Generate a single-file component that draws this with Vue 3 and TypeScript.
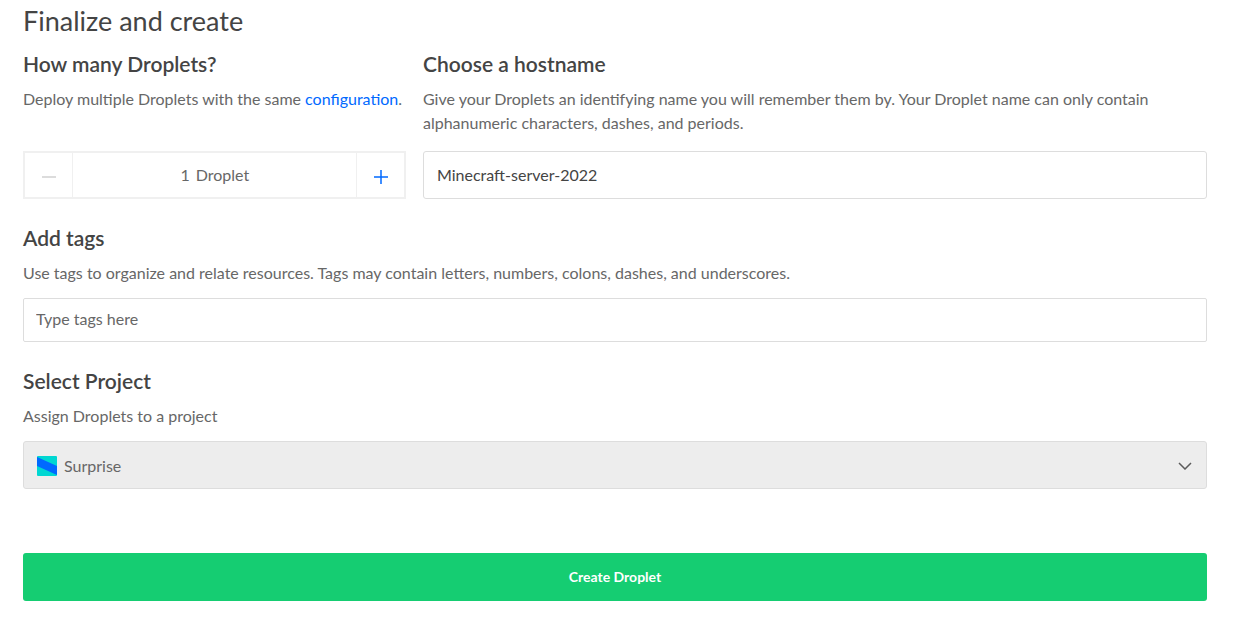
<script setup lang="ts">
import { computed, ref } from 'vue'

const count = ref<number>(1)
const hostname = ref<string>('Minecraft-server-2022')
const tags = ref<string>('')
const projects: string[] = ['Surprise']
const project = ref<string>(projects[0])

const unit = computed<string>(() => (Number(count.value) === 1 ? 'Droplet' : 'Droplets'))

function step(delta: number): void {
  count.value = Math.max(1, Number(count.value) + delta)
}
</script>

<template>
  <form class="finalize" @submit.prevent>
    <h1 class="title">Finalize and create</h1>

    <div class="columns">
      <section class="block quantity">
        <h2 class="heading"><label for="count">How many Droplets?</label></h2>
        <p class="description">
          Deploy multiple Droplets with the same <a href="#configuration">configuration</a>.
        </p>
        <div class="stepper">
          <button class="step" type="button" aria-label="Remove a Droplet" :disabled="count <= 1" @click="step(-1)">
            <svg width="16" height="18" viewBox="0 0 16 18" aria-hidden="true">
              <path d="M1 11H15" fill="none" stroke="currentColor" stroke-width="1.5" />
            </svg>
          </button>
          <div class="amount">
            <input id="count" v-model="count" class="count" type="text" inputmode="numeric" />
            <span>{{ unit }}</span>
          </div>
          <button class="step" type="button" aria-label="Add a Droplet" @click="step(1)">
            <svg width="16" height="18" viewBox="0 0 16 18" aria-hidden="true">
              <path d="M1 11H15M8 4V18" fill="none" stroke="currentColor" stroke-width="1.5" />
            </svg>
          </button>
        </div>
      </section>

      <section class="block hostname">
        <h2 class="heading"><label for="hostname">Choose a hostname</label></h2>
        <p class="description">
          Give your Droplets an identifying name you will remember them by. Your Droplet name can only contain
          alphanumeric characters, dashes, and periods.
        </p>
        <input id="hostname" v-model="hostname" class="field name-field" type="text" />
      </section>
    </div>

    <section class="block">
      <h2 class="heading"><label for="tags">Add tags</label></h2>
      <p class="description">
        Use tags to organize and relate resources. Tags may contain letters, numbers, colons, dashes, and underscores.
      </p>
      <input id="tags" v-model="tags" class="field tag-field" type="text" placeholder="Type tags here" />
    </section>

    <section class="block">
      <h2 class="heading"><label for="project">Select Project</label></h2>
      <p class="description">Assign Droplets to a project</p>
      <div class="picker">
        <svg class="project-icon" width="20" height="20" viewBox="0 0 20 20" aria-hidden="true">
          <rect width="20" height="20" rx="1" fill="#00d7d2" />
          <path d="M0 1L20 10V19L0 10Z" fill="#0069ff" />
        </svg>
        <select id="project" v-model="project" class="field project-field">
          <option v-for="name in projects" :key="name" :value="name">{{ name }}</option>
        </select>
        <svg class="chevron" width="14" height="8" viewBox="0 0 14 8" aria-hidden="true">
          <path d="M1 1L7 7L13 1" fill="none" stroke="#5b5b5b" stroke-width="1.5" />
        </svg>
      </div>
    </section>

    <button class="create" type="submit">Create Droplet</button>
  </form>
</template>

<style>
body {
  margin: 0;
  background: #fff;
}
</style>

<style scoped>
.finalize,
.finalize * {
  box-sizing: border-box;
}

.finalize {
  padding: 5px 27px 22px 23px;
  font-family: Lato, 'Liberation Sans', sans-serif;
  font-size: 16px;
  line-height: 24px;
  color: #676767;
}

.finalize button,
.finalize input,
.finalize select {
  font-family: inherit;
  font-size: inherit;
}

.title {
  margin: 0 0 12px;
  font-size: 27px;
  font-weight: 400;
  line-height: 32px;
  color: #444;
}

.columns {
  display: grid;
  grid-template-columns: repeat(3, minmax(0, 1fr));
  gap: 16px;
}

.block {
  display: flex;
  flex-direction: column;
}

.columns + .block,
.block + .block {
  margin-top: 24px;
}

.columns .block {
  margin-top: 0;
}

.hostname {
  grid-column: span 2;
}

.heading {
  margin: 0 0 8px;
  font-size: 21px;
  font-weight: 600;
  line-height: 30px;
  color: #444;
}

.description {
  margin: 0 0 13px;
}

.columns .description {
  margin-bottom: 16px;
}

.description a {
  color: #0069ff;
  text-decoration: none;
}

.stepper {
  display: flex;
  height: 48px;
  margin-top: auto;
  margin-right: 1px;
  border: 2px solid #f0f0f0;
}

.step {
  display: flex;
  flex: 0 0 47px;
  align-items: center;
  justify-content: center;
  padding: 0;
  border: 0;
  background: #fff;
  color: #0069ff;
}

.step:disabled {
  color: #d0d0d0;
}

.amount {
  display: flex;
  flex: 1;
  gap: 6px;
  align-items: center;
  justify-content: center;
  border: solid #f0f0f0;
  border-width: 0 1px;
}

.count {
  width: 10px;
  height: 24px;
  padding: 0;
  border: 0;
  color: inherit;
  line-height: 24px;
  text-align: right;
}

.field {
  width: 100%;
  border: 1px solid #ddd;
  border-radius: 3px;
  background: #fff;
}

.name-field {
  height: 48px;
  padding: 0 13px 2px;
  color: #444;
}

.tag-field {
  height: 44px;
  padding: 0 12px 4px;
  border-radius: 2px;
  color: #444;
}

.tag-field::placeholder {
  color: #676767;
  opacity: 1;
}

.picker {
  position: relative;
}

.project-field {
  display: block;
  height: 48px;
  padding: 0 40px;
  appearance: none;
  background: #ededed;
  color: #676767;
}

.project-icon {
  position: absolute;
  top: 15px;
  left: 14px;
}

.chevron {
  position: absolute;
  top: 21px;
  right: 15px;
}

.create {
  width: 100%;
  height: 48px;
  margin-top: 64px;
  padding: 0 0 2px;
  border: 0;
  border-radius: 3px;
  background: #15cd72;
  color: #fff;
}

.finalize .create {
  font-size: 14px;
  font-weight: 700;
}
</style>
